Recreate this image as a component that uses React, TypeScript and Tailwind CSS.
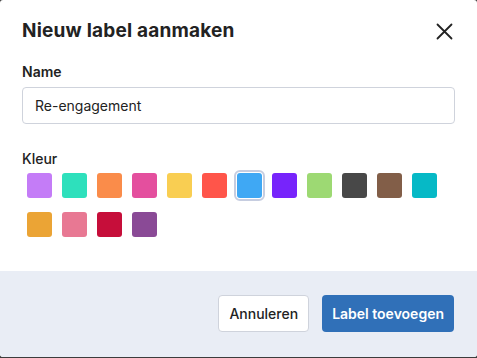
import React from "react";

const colors = [
  "#c47cf7",
  "#2ee0bc",
  "#fa8c4a",
  "#e44f9e",
  "#f9ce52",
  "#ff554a",
  "#3fa8f4",
  "#7724fb",
  "#9dd973",
  "#484848",
  "#825e48",
  "#06b9c6",
  "#eba435",
  "#e87893",
  "#c60e3a",
  "#8a4a96",
];

const Swatch: React.FC<{ color: string; selected?: boolean }> = ({ color, selected }) => {
  return (
    <button className="w-[35px] h-[35px] flex items-center justify-center">
      <span
        className={
          selected
            ? "block w-[25px] h-[25px] rounded-[3px] outline-2 outline-offset-[1.5px] outline-[#c6cde0] [outline-style:solid]"
            : "block w-[25px] h-[25px] rounded-[3px]"
        }
        style={{ backgroundColor: color }}
      />
    </button>
  );
};

export default function App() {
  return (
    <div className="w-[477px] h-[358px] bg-[#3c3c3c] font-['Inter',sans-serif] text-[#222]">
      <div className="h-[357px] bg-white rounded-[3px] overflow-hidden flex flex-col">
        <div className="flex-1 px-[22px]">
          <div className="flex items-center justify-between h-[62px]">
            <h2 className="text-[19px] font-bold tracking-[0.2px]">Nieuw label aanmaken</h2>
            <button className="mr-[2px]">
              <svg width="17" height="17" viewBox="0 0 17 17" fill="none">
                <path d="M1.5 1.5L15.5 15.5M15.5 1.5L1.5 15.5" stroke="#222" strokeWidth="1.8" strokeLinecap="round" />
              </svg>
            </button>
          </div>
          <label className="block text-[14px] font-semibold leading-[20px]">Name</label>
          <div className="mt-[5px] h-[37px] border border-[#cfd3dc] rounded-[4px] flex items-center px-[12px] text-[14px]">
            Re-engagement
          </div>
          <label className="block mt-[25px] text-[14px] font-medium leading-[20px]">Kleur</label>
          <div className="flex flex-wrap gap-y-[4px] w-[430px] -mt-[1px]">
            {colors.map((c, i) => (
              <Swatch key={c} color={c} selected={i === 6} />
            ))}
          </div>
        </div>
        <div className="h-[86px] bg-[#e9edf5] flex items-start justify-end gap-[13px] pl-[22px] pr-[23px] pt-[24px]">
          <button className="h-[37px] px-[10px] bg-white border border-[#cfd3dc] rounded-[4px] text-[14px] font-medium">
            Annuleren
          </button>
          <button className="h-[37px] px-[10px] bg-[#3070b8] rounded-[4px] text-[14px] font-semibold text-white">
            Label toevoegen
          </button>
        </div>
      </div>
    </div>
  );
}
